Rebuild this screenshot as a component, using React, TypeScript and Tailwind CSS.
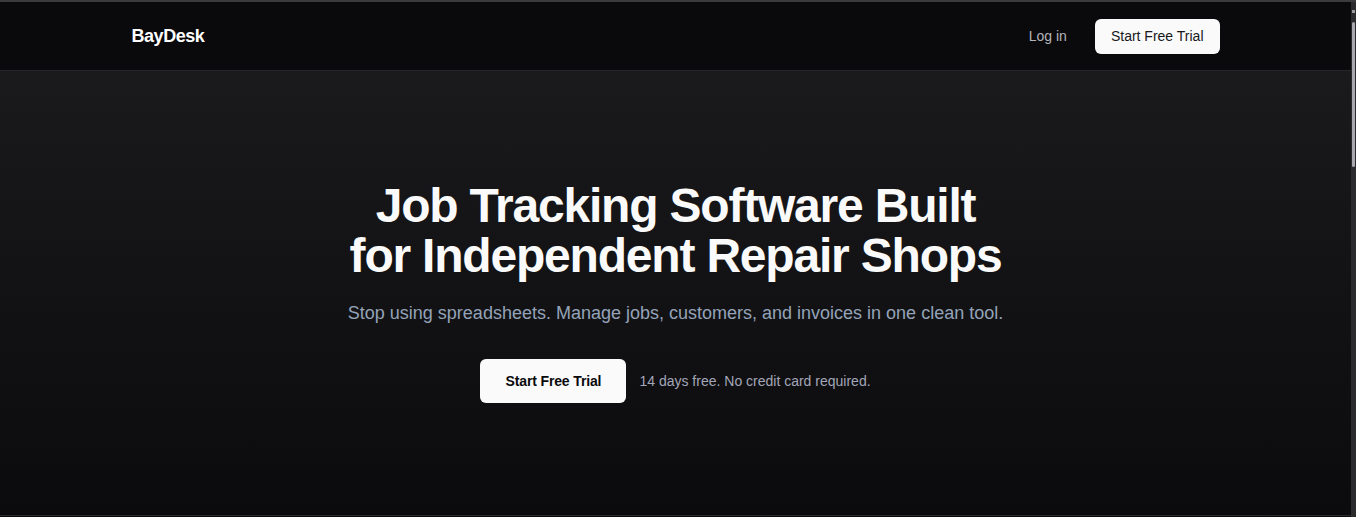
import { ReactNode } from 'react';

function NavBar() {
  return (
    <header className="h-[69px] border-b border-[#26262a] bg-[#0a0a0c]">
      <div className="mx-auto flex h-full max-w-[1152px] items-center justify-between px-8">
        <a href="#" className="text-lg font-bold tracking-tight text-white">
          BayDesk
        </a>
        <nav className="flex items-center gap-7">
          <a href="#" className="text-sm text-[#b4b4bb]">
            Log in
          </a>
          <button className="flex h-[35px] items-center rounded-md bg-[#fafafa] px-4 text-sm text-[#18181b]">
            Start Free Trial
          </button>
        </nav>
      </div>
    </header>
  );
}

function Hero({ children }: { children?: ReactNode }) {
  return (
    <section className="border-b border-[#2a2a2e] bg-gradient-to-b from-[#1a1a1c] to-[#0b0b0d] pt-[110px] pb-[112px] text-center">
      <h1 className="text-[48px] leading-[50px] font-bold tracking-tight text-[#fafafa]">
        Job Tracking Software Built
        <br />
        for Independent Repair Shops
      </h1>
      <p className="mt-[18px] text-lg text-[#94a3b8]">
        Stop using spreadsheets. Manage jobs, customers, and invoices in one clean tool.
      </p>
      <div className="mt-[32px] flex items-center justify-center gap-[13px]">
        <button className="flex h-11 w-[146px] items-center justify-center rounded-md bg-[#fafafa] text-sm font-bold tracking-[-0.01em] text-[#0a0a0c]">
          Start Free Trial
        </button>
        <span className="text-sm text-[#a3a6b8]">14 days free. No credit card required.</span>
      </div>
      {children}
    </section>
  );
}

export default function App() {
  return (
    <div
      className="flex h-[517px] flex-col overflow-hidden border-t-2 border-[#3b3b3e] bg-[#0b0b0d]"
      style={{ fontFamily: '"Liberation Sans", Arial, sans-serif' }}
    >
      <div className="flex flex-1">
        <main className="flex-1">
          <NavBar />
          <Hero />
        </main>
        {/* window scrollbar */}
        <div className="flex w-[5px] flex-col items-center bg-[#2b2b2e] pt-[8px]">
          <div className="h-[3px] w-[3px] bg-[#9a9aa0]" />
          <div className="mt-[9px] h-[145px] w-[3px] rounded-full bg-[#a8a8ae]" />
        </div>
      </div>
    </div>
  );
}
